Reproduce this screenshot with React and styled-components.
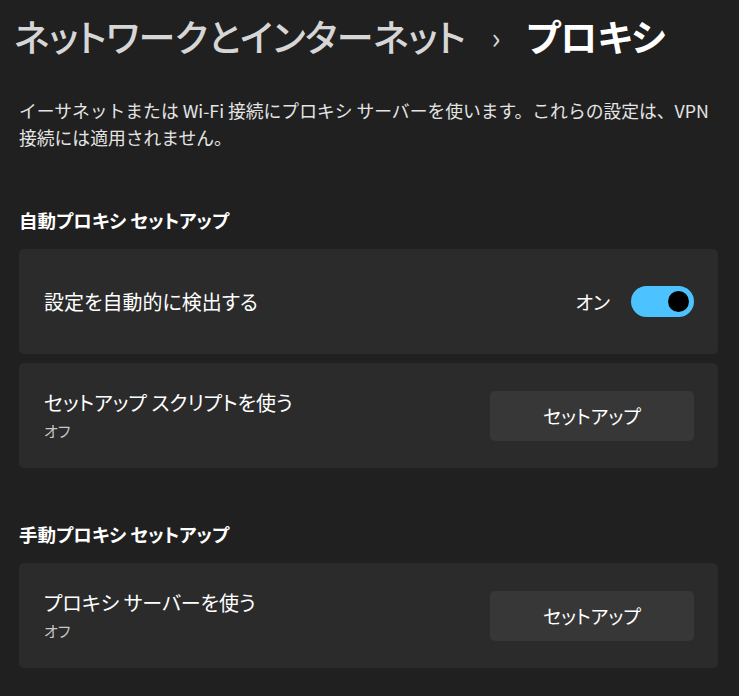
import React from 'react';
import styled, { createGlobalStyle } from 'styled-components';

const color = {
   bg: '#202020',
   card: '#2b2b2b',
   button: '#373737',
   text: '#ffffff',
   soft: '#d6d6d6',
   muted: '#c8c8c8',
   accent: '#4cc2ff',
};

const GlobalStyle = createGlobalStyle`
   html, body {
      margin: 0;
      background: ${color.bg};
   }
   body {
      font-family: 'Noto Sans CJK JP', 'Noto Sans', sans-serif;
      font-feature-settings: 'palt';
      color: ${color.text};
   }
`;

const rows = [
   {
      section: '自動プロキシ セットアップ',
      items: [
         { id: 'auto', title: '設定を自動的に検出する', toggle: true },
         { id: 'script', title: 'セットアップ スクリプトを使う', sub: 'オフ', button: 'セットアップ' },
      ],
   },
   {
      section: '手動プロキシ セットアップ',
      items: [{ id: 'manual', title: 'プロキシ サーバーを使う', sub: 'オフ', button: 'セットアップ' }],
   },
];

const App = () => {
   return (
      <Wrapper>
         <GlobalStyle />
         <Title>
            <Crumb>ネットワークとインターネット</Crumb>
            <Chevron>›</Chevron>
            <Current>プロキシ</Current>
         </Title>
         <Description>
            イーサネットまたは Wi-Fi 接続にプロキシ サーバーを使います。これらの設定は、VPN
            <br />
            接続には適用されません。
         </Description>

         {rows.map((group) => (
            <Section key={group.section}>
               <SectionTitle>{group.section}</SectionTitle>
               <CardList>
                  {group.items.map((item) => (
                     <Card key={item.id}>
                        <Labels>
                           <CardTitle>{item.title}</CardTitle>
                           {item.sub && <CardSub>{item.sub}</CardSub>}
                        </Labels>
                        {item.toggle ? (
                           <ToggleWrapper>
                              <ToggleLabel>オン</ToggleLabel>
                              <Toggle>
                                 <Knob />
                              </Toggle>
                           </ToggleWrapper>
                        ) : (
                           <Button>{item.button}</Button>
                        )}
                     </Card>
                  ))}
               </CardList>
            </Section>
         ))}
      </Wrapper>
   );
};

const Wrapper = styled.div`
   padding: 10px 21px 30px 19px;
   min-height: 696px;
   box-sizing: border-box;
   background-color: ${color.bg};
`;

const Title = styled.h1`
   margin: 0 0 0 -5px;
   display: flex;
   align-items: center;
   gap: 22px;
   font-size: 37px;
   line-height: 52px;
   font-weight: 500;
   letter-spacing: -0.3px;
`;

const Crumb = styled.span`
   color: ${color.soft};
`;

const Chevron = styled.span`
   color: ${color.soft};
   font-size: 30px;
   font-weight: 400;
   padding: 0 4px;
`;

const Current = styled.span`
   color: ${color.text};
   font-weight: 700;
`;

const Description = styled.p`
   margin: 35px 0 0 0;
   font-size: 17.8px;
   line-height: 27px;
   color: #e4e4e4;
   font-feature-settings: normal;
   white-space: nowrap;
`;

const Section = styled.section`
   margin-top: 57px;

   & + & {
      margin-top: 54px;
   }
`;

const SectionTitle = styled.h2`
   margin: 0 0 17px 0;
   font-size: 18.5px;
   line-height: 24px;
   font-weight: 700;
   color: ${color.text};
`;

const CardList = styled.div`
   display: flex;
   flex-direction: column;
   gap: 9px;
`;

const Card = styled.div`
   height: 105px;
   box-sizing: border-box;
   display: flex;
   align-items: center;
   justify-content: space-between;
   padding: 0 24px 0 25px;
   background-color: ${color.card};
   border-radius: 5px;
`;

const Labels = styled.div`
   display: flex;
   flex-direction: column;
   gap: 4px;
`;

const CardTitle = styled.div`
   font-size: 20px;
   line-height: 26px;
   color: ${color.text};
`;

const CardSub = styled.div`
   font-size: 15px;
   line-height: 22px;
   color: ${color.muted};
`;

const ToggleWrapper = styled.div`
   display: flex;
   align-items: center;
   gap: 21px;
`;

const ToggleLabel = styled.span`
   font-size: 19px;
   color: ${color.text};
`;

const Toggle = styled.div`
   width: 63px;
   height: 31px;
   border-radius: 16px;
   background-color: ${color.accent};
   display: flex;
   align-items: center;
   justify-content: flex-end;
   padding-right: 5px;
   box-sizing: border-box;
`;

const Knob = styled.div`
   width: 21px;
   height: 21px;
   border-radius: 50%;
   background-color: #000;
`;

const Button = styled.div`
   width: 204px;
   height: 50px;
   display: grid;
   place-items: center;
   background-color: ${color.button};
   border-radius: 5px;
   font-size: 19px;
   color: ${color.text};
`;

export default App;
